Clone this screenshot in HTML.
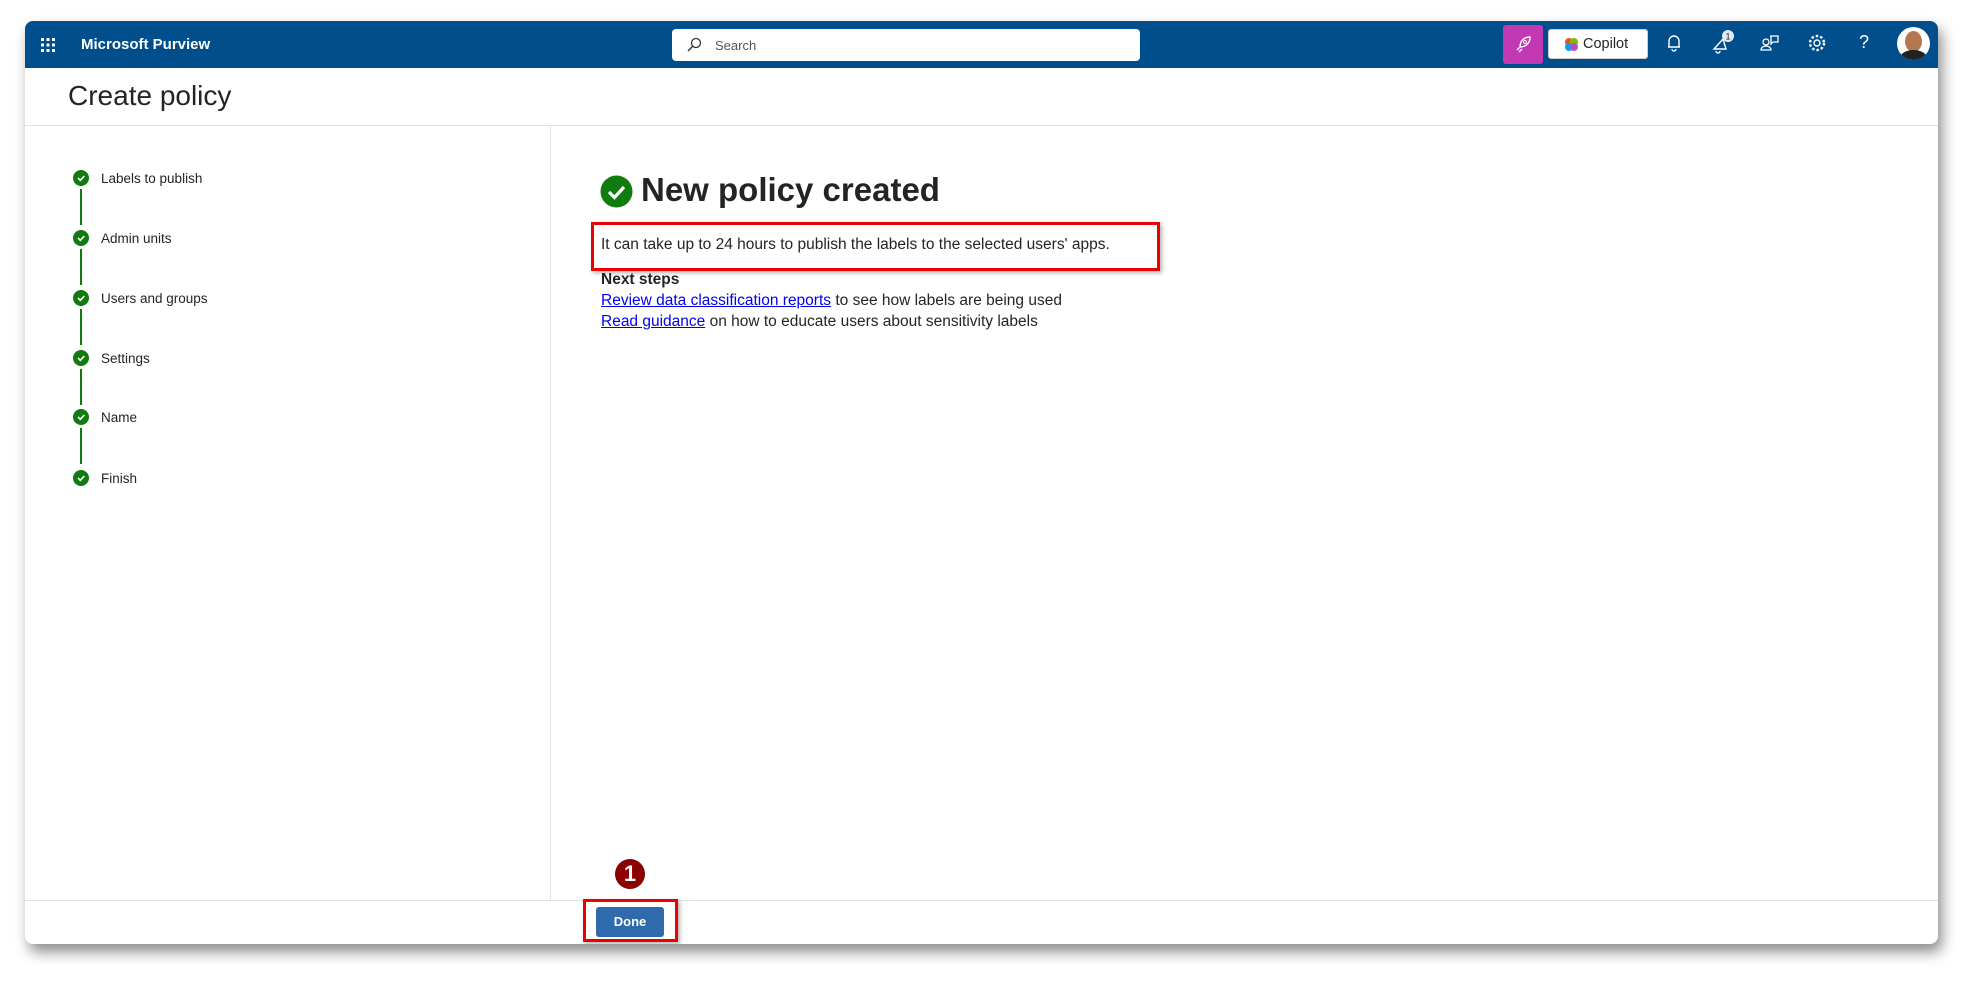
<!DOCTYPE html>
<html><head><meta charset="utf-8"><style>
body{margin:0;width:1980px;height:988px;background:#fff;position:relative;overflow:hidden;font-family:"Liberation Sans",sans-serif;}
.win{position:absolute;left:25px;top:21px;width:1913px;height:923px;background:#fff;border-radius:8px;box-shadow:4px 8px 14px rgba(0,0,0,.45);overflow:hidden;}
.hdr{position:absolute;left:0;top:0;right:0;height:47px;background:#004e8c;}
.a{position:absolute;}
.step{position:absolute;left:76px;font-size:13.5px;color:#242424;}
.dot{position:absolute;left:-28px;top:-1px;width:16px;height:16px;border-radius:50%;background:#107c10;}
.dot svg{position:absolute;left:3px;top:3px}
.vl{position:absolute;left:55px;width:2px;height:36px;background:#107c10;}
a{color:#0000ee;text-decoration:underline;}
.ic{position:absolute;top:12px;}
</style></head><body>
<div class="win">
 <div class="hdr">
  <svg class="a" style="left:15px;top:16px" width="16" height="16"><g fill="#fff"><rect x="1" y="1" width="3" height="3"/><rect x="6.5" y="1" width="3" height="3"/><rect x="12" y="1" width="3" height="3"/><rect x="1" y="6.5" width="3" height="3"/><rect x="6.5" y="6.5" width="3" height="3"/><rect x="12" y="6.5" width="3" height="3"/><rect x="1" y="12" width="3" height="3"/><rect x="6.5" y="12" width="3" height="3"/><rect x="12" y="12" width="3" height="3"/></g></svg>
  <div class="a" style="left:56px;top:15px;color:#fff;font-weight:bold;font-size:15px">Microsoft Purview</div>
  <div class="a" style="left:647px;top:8px;width:468px;height:32px;background:#fff;border-radius:4px;">
   <svg class="a" style="left:14px;top:8px" width="16" height="16"><circle cx="10" cy="6" r="4.5" fill="none" stroke="#333" stroke-width="1.3"/><path d="M7 9 L2 14" stroke="#333" stroke-width="1.4"/></svg>
   <span class="a" style="left:43px;top:9px;font-size:13px;color:#555">Search</span>
  </div>
  <div class="a" style="left:1478px;top:4px;width:40px;height:39px;background:#c239b3;border-radius:3px">
   <svg class="a" style="left:11px;top:10px" width="18" height="18"><path d="M6 12 C6 6 10 2 16 2 C16 8 12 12 6 12 Z M6 12 L3 15 M8 14 L5 17" fill="none" stroke="#fff" stroke-width="1.4"/><circle cx="11" cy="7" r="1.5" fill="none" stroke="#fff"/></svg>
  </div>
  <div class="a" style="left:1523px;top:8px;width:100px;height:30px;background:#fff;border-radius:3px;border:1px solid #ccc;box-sizing:border-box">
   <svg class="a" style="left:16px;top:8px" width="13" height="13"><circle cx="4" cy="4" r="4" fill="#f25022"/><circle cx="9" cy="4" r="4" fill="#7fba00"/><circle cx="4" cy="9" r="4" fill="#00a4ef"/><circle cx="9" cy="9" r="4" fill="#b14fc5"/></svg>
   <span class="a" style="left:34px;top:6px;font-size:14.5px;color:#242424">Copilot</span>
  </div>
  <svg class="ic" style="left:1640px" width="18" height="20"><path d="M4 14 V8 a5 5 0 0 1 10 0 V14 H3 H15 M7 16 a2 2 0 0 0 4 0" fill="none" stroke="#fff" stroke-width="1.4"/></svg>
  <svg class="ic" style="left:1686px;top:8px" width="26" height="26"><path d="M3 20 L12 10 L15 20 Z M5 22 a2 2 0 0 0 4 0" fill="none" stroke="#fff" stroke-width="1.4"/><circle cx="17" cy="7" r="6" fill="#deecf9"/><text x="17" y="10.5" font-size="9" text-anchor="middle" fill="#222" font-family="Liberation Sans">1</text></svg>
  <svg class="ic" style="left:1735px" width="20" height="20"><circle cx="6" cy="9" r="3" fill="none" stroke="#fff" stroke-width="1.3"/><path d="M1 17 a5 4 0 0 1 10 0 Z M10 3 H18 V9 H13 L11 11 V3" fill="none" stroke="#fff" stroke-width="1.3"/></svg>
  <svg class="ic" style="left:1782px" width="20" height="20"><circle cx="10" cy="10" r="3" fill="none" stroke="#fff" stroke-width="1.4"/><circle cx="10" cy="10" r="7" fill="none" stroke="#fff" stroke-width="2.4" stroke-dasharray="2.5 2"/></svg>
  <div class="a" style="left:1834px;top:11px;color:#fff;font-size:18px">?</div>
  <div class="a" style="left:1872px;top:6px;width:33px;height:33px;border-radius:50%;background:#fff;overflow:hidden">
   <div class="a" style="left:8px;top:4px;width:17px;height:21px;border-radius:50%;background:#b5774f"></div>
   <div class="a" style="left:3px;top:23px;width:27px;height:16px;border-radius:50% 50% 0 0;background:#222"></div>
  </div>
 </div>
 <div class="a" style="left:43px;top:59px;font-size:28px;color:#242424;font-weight:500">Create policy</div>
 <div class="a" style="left:0;right:0;top:104px;height:1px;background:#e1e1e1"></div>
 <div class="a" style="left:525px;top:105px;width:1px;height:774px;background:#e1e1e1"></div>
 <div class="a" style="left:0;right:0;top:879px;height:1px;background:#e1e1e1"></div>

 <div class="step" style="top:150px"><div class="dot"><svg width="10" height="10"><path d="M2 5 L4.3 7.3 L8.3 3" stroke="#fff" stroke-width="1.6" fill="none"/></svg></div>Labels to publish</div>
 <div class="vl" style="top:168px"></div>
 <div class="step" style="top:210px"><div class="dot"><svg width="10" height="10"><path d="M2 5 L4.3 7.3 L8.3 3" stroke="#fff" stroke-width="1.6" fill="none"/></svg></div>Admin units</div>
 <div class="vl" style="top:228px"></div>
 <div class="step" style="top:270px"><div class="dot"><svg width="10" height="10"><path d="M2 5 L4.3 7.3 L8.3 3" stroke="#fff" stroke-width="1.6" fill="none"/></svg></div>Users and groups</div>
 <div class="vl" style="top:288px"></div>
 <div class="step" style="top:330px"><div class="dot"><svg width="10" height="10"><path d="M2 5 L4.3 7.3 L8.3 3" stroke="#fff" stroke-width="1.6" fill="none"/></svg></div>Settings</div>
 <div class="vl" style="top:348px"></div>
 <div class="step" style="top:389px"><div class="dot"><svg width="10" height="10"><path d="M2 5 L4.3 7.3 L8.3 3" stroke="#fff" stroke-width="1.6" fill="none"/></svg></div>Name</div>
 <div class="vl" style="top:407px"></div>
 <div class="step" style="top:450px"><div class="dot"><svg width="10" height="10"><path d="M2 5 L4.3 7.3 L8.3 3" stroke="#fff" stroke-width="1.6" fill="none"/></svg></div>Finish</div>

 <svg class="a" style="left:575px;top:154px" width="33" height="33"><circle cx="16.5" cy="16.5" r="16" fill="#107c10"/><path d="M9 17 L14.5 22.5 L24 12" stroke="#fff" stroke-width="3.2" fill="none"/></svg>
 <div class="a" style="left:616px;top:150px;font-size:33px;font-weight:bold;color:#242424">New policy created</div>
 <div class="a" style="left:566px;top:201px;width:563px;height:43px;border:3px solid #e00;box-shadow:2px 2px 4px rgba(0,0,0,.3)"></div>
 <div class="a" style="left:576px;top:215px;font-size:15.5px;color:#242424">It can take up to 24 hours to publish the labels to the selected users' apps.</div>
 <div class="a" style="left:576px;top:248px;font-size:15.5px;line-height:21px;color:#242424"><b>Next steps</b><br><a>Review data classification reports</a> to see how labels are being used<br><a>Read guidance</a> on how to educate users about sensitivity labels</div>

 <div class="a" style="left:590px;top:838px;width:30px;height:30px;border-radius:50%;background:#8b0000;color:#fff;font-weight:bold;font-size:22px;text-align:center;line-height:30px">1</div>
 <div class="a" style="left:558px;top:878px;width:95px;height:43px;border:3px solid #e00;box-sizing:border-box;box-shadow:2px 2px 4px rgba(0,0,0,.3)"></div>
 <div class="a" style="left:571px;top:886px;width:68px;height:30px;background:#2f6aac;border-radius:3px;color:#fff;font-weight:bold;font-size:13px;text-align:center;line-height:30px">Done</div>
</div>
</body></html>
